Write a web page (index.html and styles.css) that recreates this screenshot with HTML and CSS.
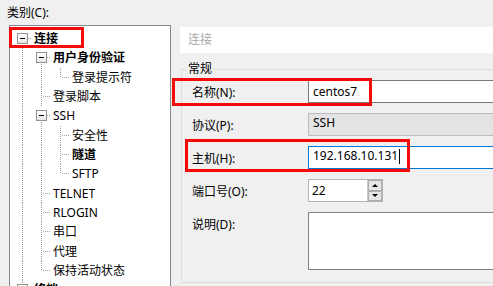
FILE: index.html
```html
<!DOCTYPE html>
<html lang="zh-CN">
<head>
    <meta charset="UTF-8">
    <title>会话属性 - 连接</title>
    <link rel="stylesheet" href="styles.css">
</head>
<body>
    <div class="dialog">
        <div class="category">
            <div class="category-label">类别(C):</div>
            <div class="tree">
                <div class="node"><i class="c box-first"></i><span class="t bold">连接</span></div>
                <div class="node"><i class="c vl"></i><i class="c box-mid"></i><span class="t bold">用户身份验证</span></div>
                <div class="node"><i class="c vl"></i><i class="c vl"></i><i class="c ell"></i><span class="t">登录提示符</span></div>
                <div class="node"><i class="c vl"></i><i class="c tee"></i><span class="t">登录脚本</span></div>
                <div class="node"><i class="c vl"></i><i class="c box-mid"></i><span class="t">SSH</span></div>
                <div class="node"><i class="c vl"></i><i class="c vl"></i><i class="c tee"></i><span class="t">安全性</span></div>
                <div class="node"><i class="c vl"></i><i class="c vl"></i><i class="c tee"></i><span class="t bold">隧道</span></div>
                <div class="node"><i class="c vl"></i><i class="c vl"></i><i class="c ell"></i><span class="t">SFTP</span></div>
                <div class="node"><i class="c vl"></i><i class="c tee"></i><span class="t">TELNET</span></div>
                <div class="node"><i class="c vl"></i><i class="c tee"></i><span class="t">RLOGIN</span></div>
                <div class="node"><i class="c vl"></i><i class="c tee"></i><span class="t">串口</span></div>
                <div class="node"><i class="c vl"></i><i class="c tee"></i><span class="t">代理</span></div>
                <div class="node"><i class="c vl"></i><i class="c ell"></i><span class="t">保持活动状态</span></div>
                <div class="node"><i class="c box-last"></i><span class="t bold">终端</span></div>
            </div>
            <div class="mark mark-tree"></div>
        </div>

        <div class="content">
            <div class="page-title">连接</div>

            <fieldset class="group">
                <legend>常规</legend>

                <div class="row">
                    <label for="name">名称(N):</label>
                    <input type="text" id="name" class="field" value="centos7">
                </div>

                <div class="row">
                    <label>协议(P):</label>
                    <div class="field field-disabled">SSH</div>
                </div>

                <div class="row">
                    <label for="host">主机(H):</label>
                    <div class="field field-focus">192.168.10.131<span class="caret"></span></div>
                </div>

                <div class="row">
                    <label for="port">端口号(O):</label>
                    <div class="spin">
                        <input type="text" id="port" class="spin-input" value="22">
                        <div class="spin-buttons">
                            <span class="spin-btn up"></span>
                            <span class="spin-btn down"></span>
                        </div>
                    </div>
                </div>

                <div class="row row-top">
                    <label for="desc">说明(D):</label>
                    <textarea id="desc" class="field memo"></textarea>
                </div>
            </fieldset>

            <div class="mark mark-name"></div>
            <div class="mark mark-host"></div>
        </div>
    </div>
</body>
</html>
```

FILE: styles.css
```css
:root {
    --face: #f0f0f0;
    --line: #a0a0a0;
    --edge: #7a7a7a;
    --mark: #f50a0a;
    --font-ui: "Noto Sans", "Noto Sans CJK SC", sans-serif;
}

* {
    margin: 0;
    padding: 0;
    box-sizing: border-box;
}

html, body {
    width: 493px;
    height: 286px;
    overflow: hidden;
}

body {
    background: var(--face);
    font-family: var(--font-ui);
    font-size: 12px;
    color: #000;
}

.dialog {
    display: flex;
    height: 100%;
    position: relative;
}

/* colonne de gauche : arbre des catégories */
.category {
    width: 171px;
    flex-shrink: 0;
    padding: 5px 0 0 0;
}

.category-label {
    height: 16px;
    line-height: 16px;
    padding-left: 7px;
    margin-bottom: 4px;
}

.tree {
    margin-left: 9px;
    width: 162px;
    height: 300px;
    background: #fff;
    border: 1px solid #828790;
    border-bottom: none;
    padding: 3px 0 0 3px;
}

.node {
    display: flex;
    height: 19.33px;
    line-height: 19.33px;
    white-space: nowrap;
}

.t {
    margin-left: 2px;
}

.bold {
    font-weight: bold;
}

.c {
    display: flex;
    align-items: center;
    justify-content: center;
    width: 19px;
    height: 19.33px;
    flex-shrink: 0;
}

.vl {
    background: repeating-linear-gradient(to bottom, var(--line) 0 1px, transparent 1px 2px) 9px 0 / 1px 20px no-repeat;
}

.tee {
    background:
        repeating-linear-gradient(to right, var(--line) 0 1px, transparent 1px 2px) 11px 9px / 8px 1px no-repeat,
        repeating-linear-gradient(to bottom, var(--line) 0 1px, transparent 1px 2px) 9px 0 / 1px 20px no-repeat;
}

.ell {
    background:
        repeating-linear-gradient(to right, var(--line) 0 1px, transparent 1px 2px) 11px 9px / 8px 1px no-repeat,
        repeating-linear-gradient(to bottom, var(--line) 0 1px, transparent 1px 2px) 9px 0 / 1px 10px no-repeat;
}

.box-last {
    background:
        repeating-linear-gradient(to right, var(--line) 0 1px, transparent 1px 2px) 15px 9px / 4px 1px no-repeat,
        repeating-linear-gradient(to bottom, var(--line) 0 1px, transparent 1px 2px) 9px 0 / 1px 5px no-repeat;
}

.box-first,
.box-mid {
    background:
        repeating-linear-gradient(to right, var(--line) 0 1px, transparent 1px 2px) 15px 9px / 4px 1px no-repeat,
        repeating-linear-gradient(to bottom, var(--line) 0 1px, transparent 1px 2px) 9px 14px / 1px 6px no-repeat;
}

.box-first::before,
.box-mid::before,
.box-last::before {
    content: "";
    width: 9px;
    height: 9px;
    border: 1px solid #919191;
    background:
        linear-gradient(#000, #000) center / 5px 1px no-repeat,
        linear-gradient(#fff, #e6e6e6);
}

/* colonne de droite */
.content {
    flex: 1;
    padding: 27px 0 0 9px;
    overflow: hidden;
}

.page-title {
    height: 26px;
    line-height: 26px;
    background: #fff;
    color: #a8a8a8;
    padding-left: 8px;
    width: 400px;
}

.group {
    margin-top: 8px;
    margin-left: 1px;
    width: 400px;
    border: 1px solid #dcdcdc;
    padding: 3px 0 12px 10px;
    min-width: 0;
}

.group legend {
    margin-left: -6px;
    padding: 0 2px;
    line-height: 16px;
}

.row {
    display: flex;
    align-items: center;
    margin-bottom: 10px;
}

.row:last-child {
    margin-bottom: 0;
}

.row-top {
    align-items: flex-start;
}

.row label {
    width: 116px;
    flex-shrink: 0;
}

.row-top label {
    padding-top: 3px;
}

.field {
    display: block;
    width: 260px;
    height: 23px;
    line-height: 21px;
    padding: 0 4px;
    border: 1px solid var(--edge);
    background: #fff;
    font: inherit;
    color: #000;
    outline: none;
}

.field-disabled {
    background: #e4e4e4;
    border-color: #bcbcbc;
}

.field-focus {
    border-color: #0078d7;
}

.caret {
    display: inline-block;
    width: 1px;
    height: 15px;
    background: #000;
    vertical-align: middle;
    margin-left: 1px;
}

.memo {
    height: 58px;
    resize: none;
    border-color: #828282;
}

.spin {
    display: flex;
    height: 23px;
    border: 1px solid #b4b4b4;
    background: #fff;
}

.spin-input {
    width: 58px;
    height: 21px;
    border: none;
    padding: 0 3px;
    font: inherit;
    outline: none;
}

.spin-buttons {
    display: flex;
    flex-direction: column;
    width: 15px;
    border-left: 1px solid #c8c8c8;
}

.spin-btn {
    flex: 1;
    display: flex;
    align-items: center;
    justify-content: center;
    background: #e6e6e6;
    border: 1px solid #adadad;
}

.spin-btn::before {
    content: "";
    border-left: 3px solid transparent;
    border-right: 3px solid transparent;
}

.spin-btn.up::before {
    border-bottom: 3px solid #000;
}

.spin-btn.down::before {
    border-top: 3px solid #000;
}

/* cadres rouges d'annotation */
.mark {
    position: absolute;
    border: 3px solid var(--mark);
    pointer-events: none;
}

.mark-tree {
    left: 9px;
    top: 27px;
    width: 75px;
    height: 21px;
}

.mark-name {
    left: 172px;
    top: 78px;
    width: 200px;
    height: 28px;
}

.mark-host {
    left: 185px;
    top: 139px;
    width: 225px;
    height: 33px;
}
```
